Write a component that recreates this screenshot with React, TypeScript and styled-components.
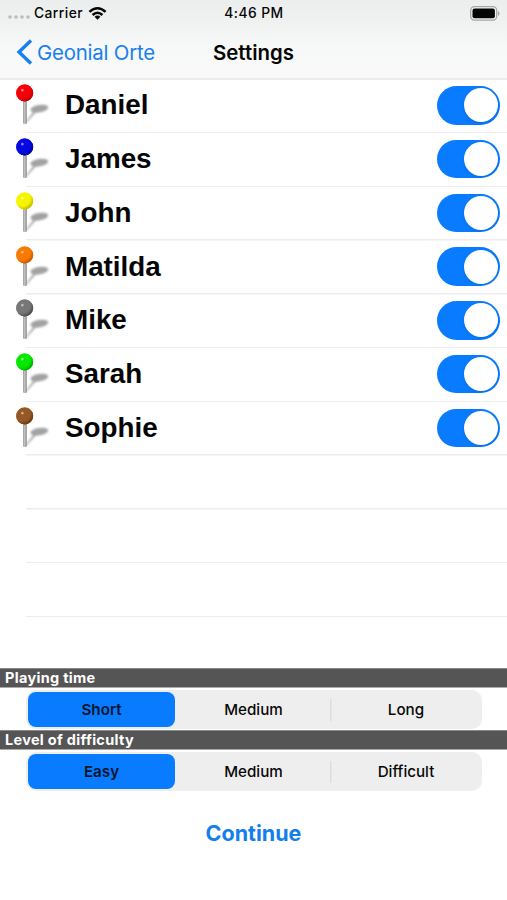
import React, { useState } from "react";
import styled, { createGlobalStyle } from "styled-components";

const GlobalStyle = createGlobalStyle`
  * { box-sizing: border-box; }
  body { margin: 0; background: #fff; color: #050505; font-family: Inter, sans-serif; }
  button { font: inherit; color: inherit; border: 0; background: none; padding: 0; }
`;

const Screen = styled.main`
  width: 507px;
  height: 900px;
  display: flex;
  flex-direction: column;
  overflow: hidden;
  background: #fff;
`;

const Header = styled.header`
  height: 79.5px;
  flex: none;
  background: linear-gradient(#eceeee 0, #f0f2f2 24px, #f7f8f8 46px, #f9f9f9 100%);
  border-bottom: 2px solid #ececed;
`;

const StatusBar = styled.div`
  height: 26px;
  display: grid;
  grid-template-columns: 1fr auto 1fr;
  align-items: center;
  padding: 0 7px 0 8px;
  font-size: 13.8px;
  letter-spacing: 0.45px;
  font-weight: 500;
`;

const Carrier = styled.div`
  display: flex;
  align-items: center;
`;

const Signal = styled.svg`
  width: 22px;
  height: 4px;
  margin: 7px 4px 0 0;
`;

const Wifi = styled.svg`
  width: 19px;
  height: 15px;
  margin-left: 5px;
`;

const Battery = styled.svg`
  width: 30px;
  height: 15px;
  justify-self: end;
`;

const NavBar = styled.nav`
  height: 52px;
  display: grid;
  grid-template-columns: 1fr auto 1fr;
  align-items: center;
  padding: 0 16px;
`;

const BackButton = styled.button`
  display: flex;
  align-items: center;
  gap: 4px;
  color: #1780ef;
  font-size: 20.4px;
  letter-spacing: -0.2px;
`;

const Chevron = styled.svg`
  width: 17px;
  height: 28px;
`;

const Title = styled.h1`
  margin: 0;
  font-size: 20.4px;
  font-weight: 600;
  letter-spacing: 0.05px;
`;

const PlayerList = styled.ul`
  height: 588.5px;
  margin: 0;
  padding: 0;
  flex: none;
  list-style: none;
`;

const PlayerRow = styled.li`
  height: 53.77px;
  display: grid;
  grid-template-columns: 50px 1fr 63px;
  align-items: center;
  padding: 0 7px 2px 15px;
  background: linear-gradient(#ededed, #ededed) 26px 100% / 100% 1.5px no-repeat;
`;

const Pin = styled.svg`
  width: 36px;
  height: 44px;
`;

const PlayerName = styled.span`
  font: 700 27.8px/34px "Liberation Sans", sans-serif;
`;

const Switch = styled.button<{ $on: boolean }>`
  width: 62.5px;
  height: 38.5px;
  display: flex;
  align-items: center;
  justify-content: ${(p) => (p.$on ? "flex-end" : "flex-start")};
  padding: 2px;
  border-radius: 20px;
  background: ${(p) => (p.$on ? "#087bff" : "#e5e5e5")};
`;

const Knob = styled.span`
  width: 34px;
  height: 34px;
  border-radius: 50%;
  background: #fff;
  box-shadow: 0 1px 3px #0002;
`;

const SectionLabel = styled.h2`
  height: 20px;
  flex: none;
  margin: 0;
  padding-left: 5px;
  background: #555;
  border-bottom: 1px solid #aaa;
  border-top: 1px solid #888;
  color: #fff;
  font-size: 14.5px;
  line-height: 18px;
  font-weight: 700;
  letter-spacing: 0.3px;
`;

const SegmentArea = styled.div`
  height: 42px;
  flex: none;
  padding: 2px 25px 0 26px;
`;

const Segments = styled.div`
  height: 39px;
  display: grid;
  grid-template-columns: 149px 153px 1fr;
  padding: 2px 0 2px 2px;
  border-radius: 10px;
  background: #eee;
`;

const Segment = styled.button<{ $selected: boolean; $divided: boolean }>`
  height: 35px;
  border-radius: ${(p) => (p.$selected ? "8px" : "0")};
  margin-right: ${(p) => (p.$selected ? "2px" : "0")};
  background: ${(p) =>
    p.$selected ? "#087bff" : p.$divided ? "linear-gradient(#ddd, #ddd) 0 50% / 1.5px 22px no-repeat" : "transparent"};
  color: ${(p) => (p.$selected ? "#04162d" : "#080808")};
  font-size: 15.2px;
  font-weight: ${(p) => (p.$selected ? 600 : 500)};
`;

const ContinueButton = styled.button`
  align-self: center;
  margin-top: 26px;
  color: #147eec;
  font: 700 21.5px/30px Inter, sans-serif;
`;

const players = [
  { name: "Daniel", color: "#f50008", edge: "#b90005" },
  { name: "James", color: "#0508e5", edge: "#0000a0" },
  { name: "John", color: "#f5f500", edge: "#c2bd00" },
  { name: "Matilda", color: "#fa7900", edge: "#c75b00" },
  { name: "Mike", color: "#777777", edge: "#4c4c4c" },
  { name: "Sarah", color: "#05e900", edge: "#00af00" },
  { name: "Sophie", color: "#965825", edge: "#683b16" },
];

function PlayerPin({ name, color, edge }: { name: string; color: string; edge: string }) {
  return (
    <Pin viewBox="0 0 36 44" aria-hidden="true">
      <defs>
        <radialGradient id={`ball-${name}`} cx="36%" cy="33%" r="68%">
          <stop offset="0" stopColor="#fff" stopOpacity=".75" />
          <stop offset=".16" stopColor={color} stopOpacity=".85" />
          <stop offset=".28" stopColor={color} />
          <stop offset=".68" stopColor={color} />
          <stop offset="1" stopColor={edge} />
        </radialGradient>
        <linearGradient id={`stem-${name}`}>
          <stop stopColor="#888" />
          <stop offset=".45" stopColor="#ccc" />
          <stop offset="1" stopColor="#777" />
        </linearGradient>
        <filter id={`blur-${name}`} x="-30%" y="-50%" width="160%" height="200%">
          <feGaussianBlur stdDeviation=".8" />
        </filter>
      </defs>
      <g filter={`url(#blur-${name})`} fill="#a2a2a2">
        <ellipse cx="24.3" cy="25.7" rx="9" ry="3.7" transform="rotate(-9 24.3 25.7)" />
        <path d="M10 40 19 28l2 1-9 10Z" />
      </g>
      <path d="M8.2 15h3.5v25c0 1.3-3.5 1.3-3.5 0Z" fill={`url(#stem-${name})`} />
      <circle cx="9.7" cy="10" r="8.5" fill={color} />
      <circle cx="9.7" cy="10" r="8.5" fill={`url(#ball-${name})`} />
    </Pin>
  );
}

function Choice({ options }: { options: string[] }) {
  const [selected, setSelected] = useState(0);
  return (
    <SegmentArea>
      <Segments>
        {options.map((option, index) => (
          <Segment
            key={option}
            $selected={index === selected}
            $divided={index === 2}
            onClick={() => setSelected(index)}
          >
            {option}
          </Segment>
        ))}
      </Segments>
    </SegmentArea>
  );
}

export default function App() {
  const [active, setActive] = useState(players.map(() => true));
  const toggle = (index: number) => setActive((values) => values.map((v, i) => (i === index ? !v : v)));
  return (
    <>
      <GlobalStyle />
      <Screen>
        <Header>
          <StatusBar>
            <Carrier>
              <Signal viewBox="0 0 22 4" fill="#bbbdbd">
                {[2, 8, 14, 20].map((x) => <circle key={x} cx={x} cy="2" r="1.8" />)}
              </Signal>
              Carrier
              <Wifi viewBox="0 0 20 15" fill="none" stroke="#050505" strokeWidth="2.7">
                <path d="M1.5 5.8Q10-1.9 18.5 5.8M4.8 9.1Q10 4.3 15.2 9.1" />
                <path d="M6.9 10.9Q10 8.4 13.1 10.9L10 14Z" fill="#050505" stroke="none" />
              </Wifi>
            </Carrier>
            <span>4:46 PM</span>
            <Battery viewBox="0 0 30 15">
              <rect x=".7" y=".7" width="26" height="13.4" rx="3.8" fill="#f3f4f4" stroke="#a4a6a6" strokeWidth="1.3" />
              <rect x="2.5" y="2.5" width="22.4" height="9.8" rx="2" fill="#050505" />
              <path d="M28 5v5c2-1 2-4 0-5" fill="#a4a6a6" />
            </Battery>
          </StatusBar>
          <NavBar>
            <BackButton>
              <Chevron viewBox="0 0 17 28" fill="none" stroke="currentColor" strokeWidth="3.4">
                <path d="M15 2.5 3 14l12 11.5" />
              </Chevron>
              Geonial Orte
            </BackButton>
            <Title>Settings</Title>
          </NavBar>
        </Header>
        <PlayerList>
          {players.map((player, index) => (
            <PlayerRow key={player.name}>
              <PlayerPin {...player} />
              <PlayerName>{player.name}</PlayerName>
              <Switch
                role="switch"
                aria-checked={active[index]}
                $on={active[index]}
                onClick={() => toggle(index)}
              >
                <Knob />
              </Switch>
            </PlayerRow>
          ))}
          {[0, 1, 2].map((row) => <PlayerRow key={row} />)}
        </PlayerList>
        <SectionLabel>Playing time</SectionLabel>
        <Choice options={["Short", "Medium", "Long"]} />
        <SectionLabel>Level of difficulty</SectionLabel>
        <Choice options={["Easy", "Medium", "Difficult"]} />
        <ContinueButton>Continue</ContinueButton>
      </Screen>
    </>
  );
}
